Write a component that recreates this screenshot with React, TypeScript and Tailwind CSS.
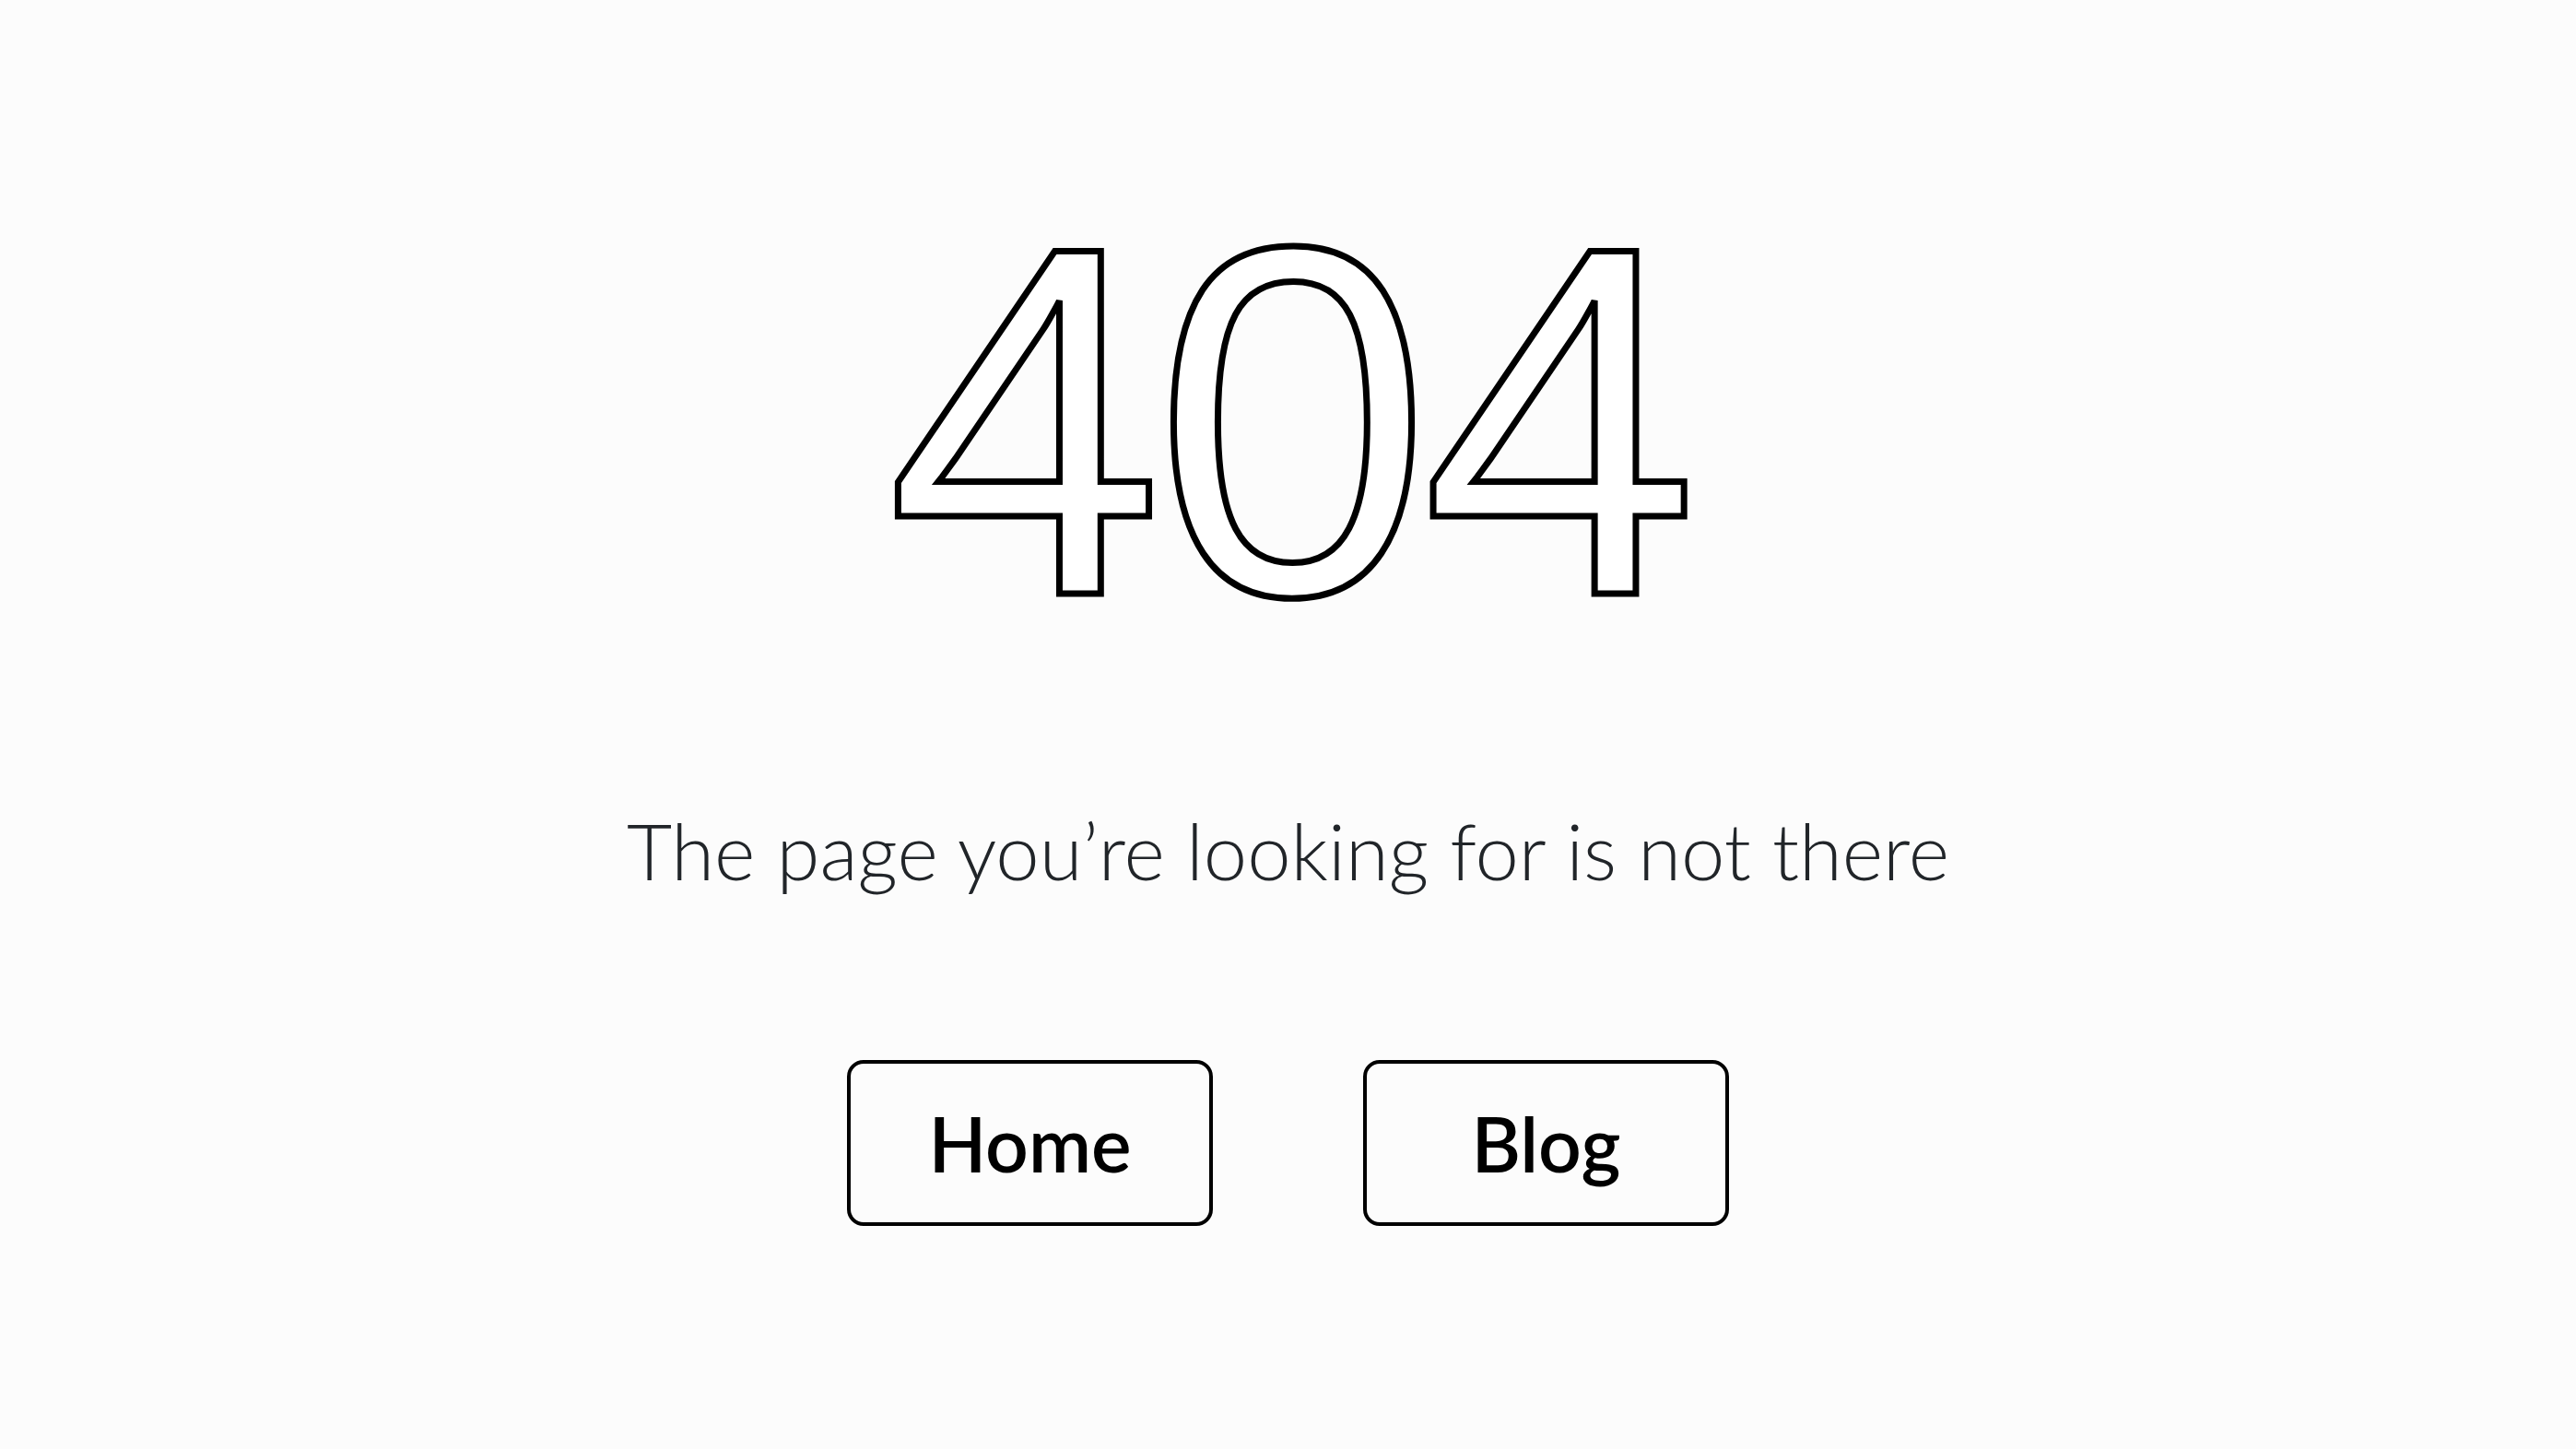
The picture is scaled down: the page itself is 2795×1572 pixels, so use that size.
import React from "react";

export default function App() {
  return (
    <div className="min-h-screen w-full bg-[#fcfcfc] flex flex-col items-center font-['Lato',sans-serif]">
      <h1 className="mt-[187px] h-[540px] flex items-center text-[540px] leading-none font-normal tracking-[-10px] text-white [font-family:'Liberation_Sans',Arial,sans-serif] [-webkit-text-stroke:7px_#000]">
        404
      </h1>
      <p className="mt-[153px] text-[85px] leading-none text-[#212529] font-light">
        The page you’re looking for is not there
      </p>
      <div className="mt-[185px] flex gap-[163px]">
        <a
          href="#"
          className="w-[397px] h-[180px] flex items-center justify-center border-4 border-black rounded-[18px] text-[82px] font-semibold text-black"
        >
          Home
        </a>
        <a
          href="#"
          className="w-[397px] h-[180px] flex items-center justify-center border-4 border-black rounded-[18px] text-[82px] font-semibold text-black"
        >
          Blog
        </a>
      </div>
    </div>
  );
}
